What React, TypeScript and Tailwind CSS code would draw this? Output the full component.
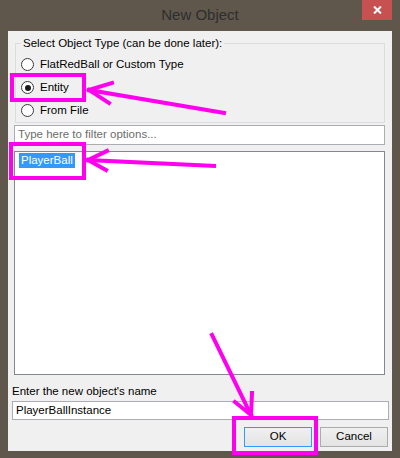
import React from "react";

const font = { fontFamily: '"Liberation Sans", Arial, sans-serif' };

const Radio = ({ label, checked }: { label: string; checked?: boolean }) => (
	<div className="flex h-[23px] items-center">
		<span className="ml-[5px] flex h-[13px] w-[13px] items-center justify-center rounded-full border border-[#3c3c3c] bg-white">
			{checked && <span className="h-[6px] w-[6px] rounded-full bg-[#1a1a1a]" />}
		</span>
		<span className="ml-[6px] text-[11.5px] text-black">{label}</span>
	</div>
);

const Annotations = () => (
	<svg className="pointer-events-none absolute left-0 top-0" width={400} height={458} viewBox="0 0 400 458">
		<g fill="none" stroke="#ff00ee" strokeWidth={4}>
			<rect x={12} y={75} width={72} height={25} />
			<rect x={11} y={144} width={73} height={34} />
			<rect x={234} y={418} width={82} height={35} />
		</g>
		<g stroke="#ff00ee" strokeWidth={4} strokeLinecap="square">
			<line x1={89} y1={90} x2={224} y2={113} />
			<line x1={89} y1={90} x2={112} y2={83} />
			<line x1={89} y1={90} x2={109} y2={103} />

			<line x1={88} y1={160} x2={214} y2={166} />
			<line x1={88} y1={160} x2={107} y2={151} />
			<line x1={88} y1={160} x2={106} y2={170} />

			<line x1={212} y1={335} x2={251} y2={415} />
			<line x1={251} y1={415} x2={252} y2={393} />
			<line x1={251} y1={415} x2={235} y2={402} />
		</g>
	</svg>
);

const App = () => {
	return (
		<div className="relative flex h-[458px] w-[400px] flex-col bg-[#5f574c]" style={font}>
			{/* title bar */}
			<div className="relative flex h-[31px] items-center justify-center">
				<span className="text-[15px] text-[#2e2e2e]">New Object</span>
				<div className="absolute right-[8px] top-0 flex h-[20px] w-[30px] items-center justify-center bg-[#c75050]">
					<svg width={9} height={8} viewBox="0 0 9 8">
						<path d="M1 0.5 L8 7.5 M8 0.5 L1 7.5" stroke="#fff" strokeWidth={2} />
					</svg>
				</div>
			</div>

			{/* client area */}
			<div className="mx-[8px] flex h-[420px] flex-col bg-[#f0f0f0]">
				<fieldset className="ml-[7px] mt-[5px] h-[87px] w-[370px] border border-[#dcdcdc] pl-[5px]">
					<legend className="px-[2px] text-[11.5px] leading-[14px] text-black">
						Select Object Type (can be done later):
					</legend>
					<div className="-ml-[5px] flex flex-col pt-[3px]">
						<Radio label="FlatRedBall or Custom Type" />
						<Radio label="Entity" checked />
						<Radio label="From File" />
					</div>
				</fieldset>

				<div className="ml-[6px] mt-[2px] flex h-[20px] w-[371px] items-center border border-[#abadb3] bg-white pl-[3px] text-[11.5px] text-[#6d6d6d]">
					Type here to filter options...
				</div>

				<div className="ml-[6px] mt-[6px] h-[224px] w-[371px] border border-[#828790] bg-white pl-[4px] pt-[1px]">
					<div className="flex h-[15px] w-fit items-center bg-[#3399ff] px-[2px] text-[11.5px] text-white">
						PlayerBall
					</div>
				</div>

				<div className="ml-[4px] mt-[9px] h-[15px] text-[11.5px] leading-[15px] text-black">
					Enter the new object's name
				</div>
				<div className="ml-[4px] mt-[2px] flex h-[19px] w-[377px] items-center border border-[#abadb3] bg-white pl-[3px] text-[11.5px] text-black">
					PlayerBallInstance
				</div>

				<div className="mt-[7px] flex justify-end gap-[8px] pr-[4px]">
					<button className="flex h-[20px] w-[68px] items-center justify-center border border-[#3399ff] bg-gradient-to-b from-[#f0f0f0] to-[#e3e3e3] text-[11.5px] text-black">
						OK
					</button>
					<button className="flex h-[20px] w-[68px] items-center justify-center border border-[#acacac] bg-gradient-to-b from-[#f0f0f0] to-[#e3e3e3] text-[11.5px] text-black">
						Cancel
					</button>
				</div>
			</div>

			<Annotations />
		</div>
	);
};

export default App;
